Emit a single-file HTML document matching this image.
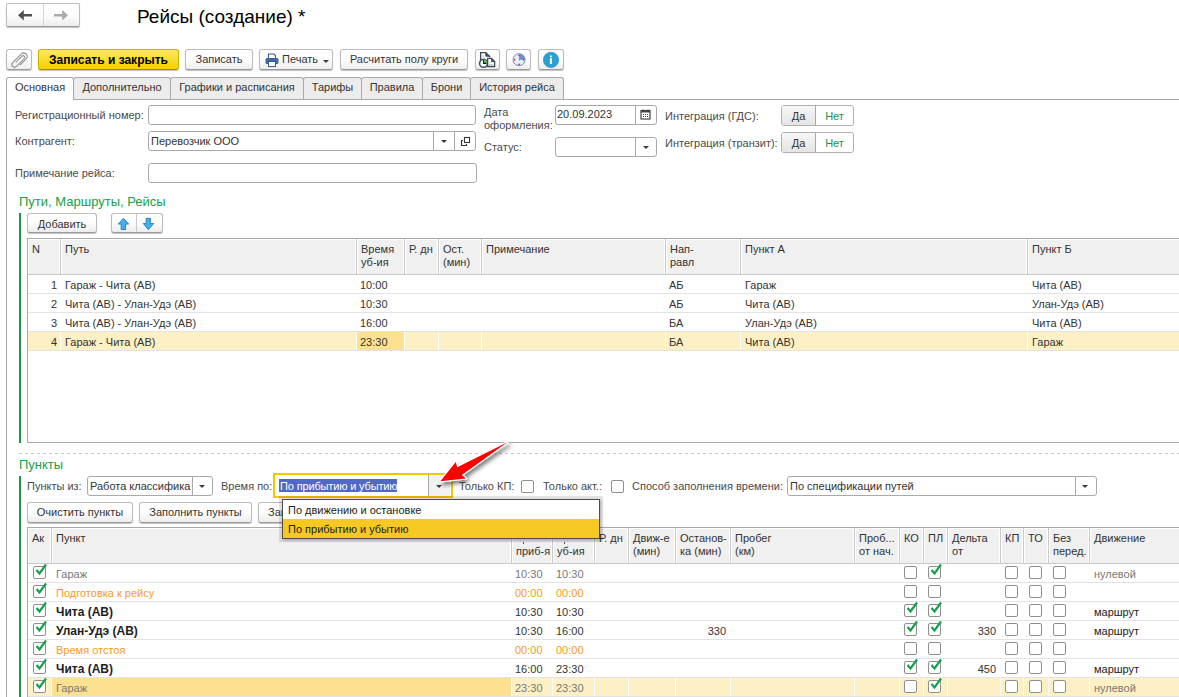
<!DOCTYPE html>
<html><head><meta charset="utf-8">
<style>
*{box-sizing:border-box;margin:0;padding:0}
html,body{width:1179px;height:697px;overflow:hidden;background:#fff}
body{position:relative;font-family:"Liberation Sans",sans-serif;font-size:11px;color:#333}
.a{position:absolute;white-space:nowrap}
.btn{position:absolute;border:1px solid #bcbcbc;border-bottom-color:#9a9a9a;border-radius:3px;background:linear-gradient(#ffffff,#fdfdfd 50%,#ededed);box-shadow:0 1px 1px rgba(0,0,0,.25);text-align:center;color:#333;white-space:nowrap}
.inp{position:absolute;border:1px solid #a9a9a9;border-radius:3px;background:#fff}
.lbl{position:absolute;white-space:nowrap;color:#4a4a4a}
.tab{position:absolute;top:77px;height:22px;border:1px solid #a9a9a9;border-bottom:none;background:#ececec;border-radius:3px 3px 0 0;color:#333;padding-top:3px;text-align:center;white-space:nowrap}
.grn{position:absolute;color:#15a04a;font-size:13px;white-space:nowrap}
.gl{position:absolute;left:19px;width:2px;background:#1a9a48}
.chk{position:absolute;width:13px;height:13px;border:1px solid #8f8f8f;border-radius:2px;background:#fff}
.dd{position:absolute;top:0;bottom:0;border-left:1px solid #a9a9a9}
.tri{position:absolute;width:0;height:0;border-left:3px solid transparent;border-right:3px solid transparent;border-top:3px solid #3a3a3a}
.tbl{position:absolute;border:1px solid #a9a9a9;border-right:none;background:#fff;overflow:hidden}
.hd{position:absolute;top:0;background:#f0f0f0;border-bottom:1px solid #c9c9c9}
.hc{position:absolute;top:0;bottom:0;border-right:1px solid #c9c9c9;box-shadow:inset -1px 0 0 #fff, inset 1px 1px 0 #fff;padding:4px 0 0 4px;line-height:12.5px;color:#333;white-space:nowrap;overflow:hidden}
.row{position:absolute;left:0;right:0;height:19px;border-bottom:1px solid #e3e3e3}
.c{position:absolute;top:4px;white-space:nowrap}
.r{text-align:right}
</style></head>
<body>
<!-- nav -->
<div class="btn" style="left:6px;top:3px;width:74px;height:24px;border-radius:2px"></div>
<div class="a" style="left:43px;top:4px;width:1px;height:22px;background:#d4d4d4"></div>
<svg class="a" style="left:0;top:0" width="80" height="28" viewBox="0 0 80 28"><path d="M18 15.3 L23.8 10 V14.1 H32 V16.6 H23.8 V20.6 Z" fill="#505050"/><path d="M68 15.3 L62.2 10 V14.1 H54 V16.6 H62.2 V20.6 Z" fill="#aaaaaa"/></svg>


<div class="a" style="left:137px;top:5.5px;font-size:19px;color:#000">Рейсы (создание) *</div>

<!-- toolbar -->
<div class="btn" style="left:6px;top:49px;width:26px;height:21px"></div>
<svg class="a" style="left:0;top:39px" width="40" height="35" viewBox="0 40 40 35"><path d="M19.7 66.3 L26.3 59.7 A3.4 3.4 0 0 0 21.5 54.9 L12.7 63.7 A2.6 2.6 0 0 0 16.4 67.4 L24.3 59.5 A1.6 1.6 0 0 0 22 57.2 L15.7 63.5" fill="none" stroke="#8c8c8c" stroke-width="1.05"/></svg>
<div class="btn" style="left:38px;top:49px;width:141px;height:21px;background:linear-gradient(#fde95e,#f5d000);border-color:#d0b000;border-bottom-color:#a88e00;font-weight:bold;color:#000;padding-top:3px;font-size:12px">Записать и закрыть</div>
<div class="btn" style="left:185px;top:49px;width:68px;height:21px;padding-top:3px">Записать</div>
<div class="btn" style="left:259px;top:49px;width:74px;height:21px"></div>
<svg class="a" style="left:265px;top:53px" width="14" height="14" viewBox="0 0 14 14"><path d="M3.5 5 V1 H9 L10.5 2.5 V5" fill="#fff" stroke="#3d5a80" stroke-width="1.1"/><rect x="0.5" y="5" width="13" height="6" rx="1.5" fill="#3d6aa0"/><rect x="3.5" y="8.5" width="7" height="5" fill="#fff" stroke="#3d5a80" stroke-width="1"/></svg>
<div class="a" style="left:282px;top:53px">Печать</div>
<div class="tri" style="left:323px;top:60px"></div>
<div class="btn" style="left:340px;top:49px;width:128px;height:21px;padding-top:3px">Расчитать полу круги</div>
<div class="btn" style="left:475px;top:49px;width:25px;height:21px"></div>
<svg class="a" style="left:476px;top:49px" width="24" height="21" viewBox="476 49 24 21"><g stroke="#3b4a5e" stroke-width="1.3" fill="#fff" stroke-linejoin="miter"><path d="M480.6 60 V52.7 H485.8 L490.2 57"/><path d="M485.8 52.7 V56.2 H489.5" fill="#3b4a5e" stroke-width="0.9"/><path d="M487.6 66.5 V58.4 H491.5 L494.6 61.5 V66.5 Z"/><path d="M491.5 58.4 V61.6 H494.3" fill="#3b4a5e" stroke-width="0.9"/></g><g stroke="#b8c0c8" stroke-width="0.8"><path d="M482 56h2M482 58h3.5M489 62.5h1.5M489 64.5h4"/></g><circle cx="483.5" cy="63.4" r="3.9" fill="#fff" stroke="#3b4a5e" stroke-width="1.5"/><path d="M483.5 63.4 V59.8 A3.6 3.6 0 0 1 487.1 63.4 Z" fill="#55e055"/><path d="M483.6 60.2 V63.4 H486.6" fill="none" stroke="#111" stroke-width="1.1"/></svg>
<div class="btn" style="left:506px;top:49px;width:25px;height:21px"></div>
<svg class="a" style="left:506px;top:49px" width="26" height="21" viewBox="506 49 26 21"><circle cx="519.05" cy="59.7" r="6" fill="#e6effc" stroke="#6b8fd2" stroke-width="1"/><path d="M519.05 59.7 V53.7 A6 6 0 0 1 525.05 59.7 Z" fill="#6b8fd2"/><g fill="#f43b22"><ellipse cx="519.1" cy="55.5" rx="1.1" ry="0.8"/><ellipse cx="514.6" cy="59.7" rx="0.8" ry="1.1"/><ellipse cx="523.5" cy="59.7" rx="0.8" ry="1.1"/><ellipse cx="519.1" cy="64.4" rx="1.1" ry="0.8"/></g><circle cx="519.3" cy="59.8" r="0.6" fill="#5577bb"/></svg>
<div class="btn" style="left:538px;top:49px;width:26px;height:21px"></div>
<svg class="a" style="left:538px;top:49px" width="26" height="21" viewBox="538 49 26 21"><circle cx="551" cy="59.9" r="7.7" fill="#2ba0d3" stroke="#2387b8" stroke-width="0.6"/><rect x="549.9" y="55.6" width="2.1" height="1.5" fill="#fff"/><rect x="549.9" y="58.2" width="2.1" height="5.7" fill="#fff"/></svg>

<!-- tabs -->
<div class="a" style="left:6px;top:99px;width:1px;height:598px;background:#a9a9a9"></div>
<div class="a" style="left:73px;top:99px;width:1106px;height:1px;background:#a9a9a9"></div>
<div class="tab" style="left:6px;width:68px;background:#fff;height:23px;z-index:2">Основная</div>
<div class="tab" style="left:73px;width:98px">Дополнительно</div>
<div class="tab" style="left:170px;width:134px">Графики и расписания</div>
<div class="tab" style="left:303px;width:59px">Тарифы</div>
<div class="tab" style="left:361px;width:62px">Правила</div>
<div class="tab" style="left:422px;width:49px">Брони</div>
<div class="tab" style="left:470px;width:94px">История рейса</div>

<!-- fields -->
<div class="lbl" style="left:15px;top:109px">Регистрационный номер:</div>
<div class="inp" style="left:148px;top:105px;width:328px;height:20px"></div>
<div class="lbl" style="left:15px;top:135px">Контрагент:</div>
<div class="inp" style="left:148px;top:131px;width:328px;height:20px">
  <div class="dd" style="left:284px"></div><div class="dd" style="left:305px"></div>
</div>
<div class="tri" style="left:441px;top:140px"></div>
<svg class="a" style="left:455px;top:131px" width="20" height="20" viewBox="455 131 20 20"><path d="M463 140.5 H461.5 V145.5 H466.5 V144" fill="none" stroke="#333" stroke-width="1.1"/><rect x="464.5" y="137.5" width="5" height="5" fill="none" stroke="#333" stroke-width="1.1"/></svg>
<div class="a" style="left:151px;top:135px;color:#333">Перевозчик ООО</div>
<div class="lbl" style="left:15px;top:167px">Примечание рейса:</div>
<div class="inp" style="left:148px;top:163px;width:329px;height:20px"></div>

<div class="lbl" style="left:484px;top:105.5px;line-height:13.5px">Дата<br>оформления:</div>
<div class="inp" style="left:555px;top:105px;width:102px;height:20px"><div class="dd" style="left:79px"></div></div>
<div class="a" style="left:557px;top:108px">20.09.2023</div>
<svg class="a" style="left:640px;top:109px" width="11" height="11" viewBox="0 0 11 11"><rect x="1" y="1.5" width="9" height="8.5" fill="none" stroke="#444" stroke-width="1.2"/><rect x="1" y="1.5" width="9" height="2" fill="#444"/><path d="M3 5.5h1M5 5.5h1M7 5.5h1M3 7.5h1M5 7.5h1M7 7.5h1" stroke="#444" stroke-width="1"/><path d="M3 0.5v2M8 0.5v2" stroke="#444"/></svg>
<div class="lbl" style="left:484px;top:141px">Статус:</div>
<div class="inp" style="left:555px;top:137px;width:102px;height:20px"><div class="dd" style="left:79px"></div></div>
<div class="tri" style="left:643px;top:146px"></div>

<div class="lbl" style="left:665px;top:110px">Интеграция (ГДС):</div>
<div class="btn" style="left:781px;top:105px;width:73px;height:21px;box-shadow:none;border-color:#b0b0b0;background:#fff"></div>
<div class="a" style="left:782px;top:106px;width:34px;height:19px;background:linear-gradient(#f7f7f7,#e4e4e4);border-right:1px solid #a8a8a8;border-radius:2px 0 0 2px;text-align:center;padding-top:4px">Да</div>
<div class="a" style="left:816px;top:110px;width:37px;text-align:center;color:#12964a">Нет</div>
<div class="lbl" style="left:665px;top:137px">Интеграция (транзит):</div>
<div class="btn" style="left:781px;top:132px;width:73px;height:21px;box-shadow:none;border-color:#b0b0b0;background:#fff"></div>
<div class="a" style="left:782px;top:133px;width:34px;height:19px;background:linear-gradient(#f7f7f7,#e4e4e4);border-right:1px solid #a8a8a8;border-radius:2px 0 0 2px;text-align:center;padding-top:4px">Да</div>
<div class="a" style="left:816px;top:137px;width:37px;text-align:center;color:#12964a">Нет</div>

<!-- section 1 -->
<div class="grn" style="left:19px;top:194px">Пути, Маршруты, Рейсы</div>
<div class="gl" style="top:213px;height:230px"></div>
<div class="btn" style="left:27px;top:213px;width:70px;height:20px;padding-top:4px">Добавить</div>
<div class="btn" style="left:111px;top:213px;width:52px;height:20px"></div>
<div class="a" style="left:136px;top:214px;width:1px;height:18px;background:#c8c8c8"></div>
<svg class="a" style="left:108px;top:210px" width="58" height="26" viewBox="108 210 58 26"><path d="M123.5 218.3 L128.7 224.1 H125.6 V229.5 H121.2 V224.1 H118.3 Z" fill="#45b0ee" stroke="#2078b6" stroke-width="0.9" stroke-linejoin="miter"/><path d="M148.4 229.7 L153.5 223.5 H150.4 V218.3 H146.2 V223.5 H143.3 Z" fill="#45b0ee" stroke="#2078b6" stroke-width="0.9"/></svg>

<div class="tbl" style="left:27px;top:238px;width:1152px;height:205px">
  <div class="hd" style="left:0;width:1152px;height:36px">
    <div class="hc" style="left:0;width:33px">N</div>
    <div class="hc" style="left:33px;width:296px">Путь</div>
    <div class="hc" style="left:329px;width:48px">Время<br>уб-ия</div>
    <div class="hc" style="left:377px;width:34px">Р. дн</div>
    <div class="hc" style="left:411px;width:43px">Ост.<br>(мин)</div>
    <div class="hc" style="left:454px;width:184px">Примечание</div>
    <div class="hc" style="left:638px;width:75px">Нап-<br>равл</div>
    <div class="hc" style="left:713px;width:287px">Пункт А</div>
    <div class="hc" style="left:1000px;width:160px">Пункт Б</div>
  </div>
  <div class="row" style="top:36px"><div class="c r" style="left:0;width:29px">1</div><div class="c" style="left:37px">Гараж - Чита (АВ)</div><div class="c" style="left:332px">10:00</div><div class="c" style="left:641px">АБ</div><div class="c" style="left:717px">Гараж</div><div class="c" style="left:1004px">Чита (АВ)</div></div>
  <div class="row" style="top:55px"><div class="c r" style="left:0;width:29px">2</div><div class="c" style="left:37px">Чита (АВ) - Улан-Удэ (АВ)</div><div class="c" style="left:332px">10:30</div><div class="c" style="left:641px">АБ</div><div class="c" style="left:717px">Чита (АВ)</div><div class="c" style="left:1004px">Улан-Удэ (АВ)</div></div>
  <div class="row" style="top:74px"><div class="c r" style="left:0;width:29px">3</div><div class="c" style="left:37px">Чита (АВ) - Улан-Удэ (АВ)</div><div class="c" style="left:332px">16:00</div><div class="c" style="left:641px">БА</div><div class="c" style="left:717px">Улан-Удэ (АВ)</div><div class="c" style="left:1004px">Чита (АВ)</div></div>
  <div class="row" style="top:93px;background:#fdf0c5"><div class="a" style="left:329px;top:0;width:47px;height:18px;background:#fce190"></div><div class="a" style="left:32px;top:0;width:1px;height:18px;background:#fff"></div><div class="a" style="left:328px;top:0;width:1px;height:18px;background:#fff"></div><div class="a" style="left:376px;top:0;width:1px;height:18px;background:#fff"></div><div class="a" style="left:410px;top:0;width:1px;height:18px;background:#fff"></div><div class="a" style="left:453px;top:0;width:1px;height:18px;background:#fff"></div><div class="a" style="left:637px;top:0;width:1px;height:18px;background:#fff"></div><div class="a" style="left:712px;top:0;width:1px;height:18px;background:#fff"></div><div class="a" style="left:999px;top:0;width:1px;height:18px;background:#fff"></div><div class="c r" style="left:0;width:29px">4</div><div class="c" style="left:37px">Гараж - Чита (АВ)</div><div class="c" style="left:332px">23:30</div><div class="c" style="left:641px">БА</div><div class="c" style="left:717px">Чита (АВ)</div><div class="c" style="left:1004px">Гараж</div></div>
</div>

<!-- section 2 -->
<div class="a" style="left:19px;top:453px;width:1160px;height:1px;background:repeating-linear-gradient(90deg,#c8c8c8 0 3px,transparent 3px 6px)"></div>
<div class="grn" style="left:19px;top:457px">Пункты</div>
<div class="gl" style="top:476px;height:221px"></div>

<div class="lbl" style="left:27px;top:480px">Пункты из:</div>
<div class="inp" style="left:87px;top:476px;width:126px;height:20px;overflow:hidden"><div class="dd" style="left:104px"></div><div class="a" style="left:2px;top:3px;width:102px;overflow:hidden;color:#333">Работа классифика</div></div>
<div class="tri" style="left:199px;top:485px"></div>
<div class="lbl" style="left:221px;top:480px">Время по:</div>
<div class="a" style="left:273px;top:473px;width:180px;height:25px;border:2px solid #f7c600;border-radius:0;background:#fff"></div>
<div class="a" style="left:428px;top:475px;width:22px;height:21px;background:#f2f2f2;border-left:1px solid #a9a9a9"></div>
<div class="tri" style="left:436px;top:485px"></div>
<div class="a" style="left:279px;top:479px;height:13px;width:118px;background:#5068c6"></div>
<div class="a" style="left:280px;top:480px;color:#fff;letter-spacing:-0.15px">По прибытию и убытию</div>
<div class="lbl" style="left:459px;top:480px">Только КП:</div>
<div class="chk" style="left:521px;top:480px"></div>
<div class="lbl" style="left:543px;top:480px">Только акт.:</div>
<div class="chk" style="left:611px;top:480px"></div>
<div class="lbl" style="left:632px;top:480px">Способ заполнения времени:</div>
<div class="inp" style="left:787px;top:476px;width:310px;height:20px"><div class="dd" style="left:287px"></div></div>
<div class="a" style="left:790px;top:480px">По спецификации путей</div>
<div class="tri" style="left:1082px;top:485px"></div>

<div class="btn" style="left:27px;top:502px;width:106px;height:21px;padding-top:3px">Очистить пункты</div>
<div class="btn" style="left:139px;top:502px;width:113px;height:21px;padding-top:3px">Заполнить пункты</div>
<div class="btn" style="left:258px;top:502px;width:80px;height:21px;padding:3px 0 0 9px;text-align:left">Заполнить</div>

<div class="tbl" style="left:27px;top:527px;width:1152px;height:170px;border-bottom:none">
  <div class="hd" style="left:0;width:1152px;height:36px">
    <div class="hc" style="left:0;width:24px">Ак</div>
    <div class="hc" style="left:24px;width:460px">Пункт</div>
    <div class="hc" style="left:484px;width:41px"><br>приб-я</div><div class="a" style="left:495px;top:14px;width:1px;height:2px;background:#555"></div>
    <div class="hc" style="left:525px;width:42px"><br>уб-ия</div><div class="a" style="left:536px;top:14px;width:1px;height:2px;background:#555"></div>
    <div class="hc" style="left:567px;width:34px">Р. дн</div>
    <div class="hc" style="left:601px;width:47px">Движ-е<br>(мин)</div>
    <div class="hc" style="left:648px;width:55px">Останов-<br>ка (мин)</div>
    <div class="hc" style="left:703px;width:124px">Пробег<br>(км)</div>
    <div class="hc" style="left:827px;width:45px">Проб...<br>от нач.</div>
    <div class="hc" style="left:872px;width:24px">КО</div>
    <div class="hc" style="left:896px;width:24px">ПЛ</div>
    <div class="hc" style="left:920px;width:53px">Дельта<br>от</div>
    <div class="hc" style="left:973px;width:23px">КП</div>
    <div class="hc" style="left:996px;width:25px">ТО</div>
    <div class="hc" style="left:1021px;width:41px">Без<br>перед.</div>
    <div class="hc" style="left:1062px;width:100px">Движение</div>
  </div>
<div class="row" style="top:36px;"><div class="chk" style="left:5px;top:2px"></div><svg class="a" style="left:6px;top:-1px" width="14" height="14" viewBox="0 0 14 14"><path d="M2.5 7 L5.5 10.5 L12 1.5" fill="none" stroke="#17a04b" stroke-width="2.2"/></svg><div class="c" style="left:28px;color:#777;font-weight:normal">Гараж</div><div class="c" style="left:487px;color:#777">10:30</div><div class="c" style="left:528px;color:#777">10:30</div><div class="chk" style="left:876px;top:2px"></div><div class="chk" style="left:900px;top:2px"></div><svg class="a" style="left:901px;top:-1px" width="14" height="14" viewBox="0 0 14 14"><path d="M2.5 7 L5.5 10.5 L12 1.5" fill="none" stroke="#17a04b" stroke-width="2.2"/></svg><div class="chk" style="left:977px;top:2px"></div><div class="chk" style="left:1001px;top:2px"></div><div class="chk" style="left:1025px;top:2px"></div><div class="c" style="left:1066px;color:#777">нулевой</div></div>
<div class="row" style="top:55px;"><div class="chk" style="left:5px;top:2px"></div><svg class="a" style="left:6px;top:-1px" width="14" height="14" viewBox="0 0 14 14"><path d="M2.5 7 L5.5 10.5 L12 1.5" fill="none" stroke="#17a04b" stroke-width="2.2"/></svg><div class="c" style="left:28px;color:#f89a1c;font-weight:normal">Подготовка к рейсу</div><div class="c" style="left:487px;color:#f89a1c">00:00</div><div class="c" style="left:528px;color:#f89a1c">00:00</div><div class="chk" style="left:876px;top:2px"></div><div class="chk" style="left:900px;top:2px"></div><div class="chk" style="left:977px;top:2px"></div><div class="chk" style="left:1001px;top:2px"></div><div class="chk" style="left:1025px;top:2px"></div></div>
<div class="row" style="top:74px;"><div class="chk" style="left:5px;top:2px"></div><svg class="a" style="left:6px;top:-1px" width="14" height="14" viewBox="0 0 14 14"><path d="M2.5 7 L5.5 10.5 L12 1.5" fill="none" stroke="#17a04b" stroke-width="2.2"/></svg><div class="c" style="left:28px;color:#1e1e1e;font-weight:bold;font-size:12px;top:3px">Чита (АВ)</div><div class="c" style="left:487px;color:#333">10:30</div><div class="c" style="left:528px;color:#333">10:30</div><div class="chk" style="left:876px;top:2px"></div><svg class="a" style="left:877px;top:-1px" width="14" height="14" viewBox="0 0 14 14"><path d="M2.5 7 L5.5 10.5 L12 1.5" fill="none" stroke="#17a04b" stroke-width="2.2"/></svg><div class="chk" style="left:900px;top:2px"></div><svg class="a" style="left:901px;top:-1px" width="14" height="14" viewBox="0 0 14 14"><path d="M2.5 7 L5.5 10.5 L12 1.5" fill="none" stroke="#17a04b" stroke-width="2.2"/></svg><div class="chk" style="left:977px;top:2px"></div><div class="chk" style="left:1001px;top:2px"></div><div class="chk" style="left:1025px;top:2px"></div><div class="c" style="left:1066px;color:#222">маршрут</div></div>
<div class="row" style="top:93px;"><div class="chk" style="left:5px;top:2px"></div><svg class="a" style="left:6px;top:-1px" width="14" height="14" viewBox="0 0 14 14"><path d="M2.5 7 L5.5 10.5 L12 1.5" fill="none" stroke="#17a04b" stroke-width="2.2"/></svg><div class="c" style="left:28px;color:#1e1e1e;font-weight:bold;font-size:12px;top:3px">Улан-Удэ (АВ)</div><div class="c" style="left:487px;color:#333">10:30</div><div class="c" style="left:528px;color:#333">16:00</div><div class="c r" style="left:648px;width:50px">330</div><div class="chk" style="left:876px;top:2px"></div><svg class="a" style="left:877px;top:-1px" width="14" height="14" viewBox="0 0 14 14"><path d="M2.5 7 L5.5 10.5 L12 1.5" fill="none" stroke="#17a04b" stroke-width="2.2"/></svg><div class="chk" style="left:900px;top:2px"></div><svg class="a" style="left:901px;top:-1px" width="14" height="14" viewBox="0 0 14 14"><path d="M2.5 7 L5.5 10.5 L12 1.5" fill="none" stroke="#17a04b" stroke-width="2.2"/></svg><div class="c r" style="left:920px;width:48px">330</div><div class="chk" style="left:977px;top:2px"></div><div class="chk" style="left:1001px;top:2px"></div><div class="chk" style="left:1025px;top:2px"></div><div class="c" style="left:1066px;color:#222">маршрут</div></div>
<div class="row" style="top:112px;"><div class="chk" style="left:5px;top:2px"></div><svg class="a" style="left:6px;top:-1px" width="14" height="14" viewBox="0 0 14 14"><path d="M2.5 7 L5.5 10.5 L12 1.5" fill="none" stroke="#17a04b" stroke-width="2.2"/></svg><div class="c" style="left:28px;color:#f89a1c;font-weight:normal">Время отстоя</div><div class="c" style="left:487px;color:#f89a1c">00:00</div><div class="c" style="left:528px;color:#f89a1c">00:00</div><div class="chk" style="left:876px;top:2px"></div><div class="chk" style="left:900px;top:2px"></div><div class="chk" style="left:977px;top:2px"></div><div class="chk" style="left:1001px;top:2px"></div><div class="chk" style="left:1025px;top:2px"></div></div>
<div class="row" style="top:131px;"><div class="chk" style="left:5px;top:2px"></div><svg class="a" style="left:6px;top:-1px" width="14" height="14" viewBox="0 0 14 14"><path d="M2.5 7 L5.5 10.5 L12 1.5" fill="none" stroke="#17a04b" stroke-width="2.2"/></svg><div class="c" style="left:28px;color:#1e1e1e;font-weight:bold;font-size:12px;top:3px">Чита (АВ)</div><div class="c" style="left:487px;color:#333">16:00</div><div class="c" style="left:528px;color:#333">23:30</div><div class="chk" style="left:876px;top:2px"></div><svg class="a" style="left:877px;top:-1px" width="14" height="14" viewBox="0 0 14 14"><path d="M2.5 7 L5.5 10.5 L12 1.5" fill="none" stroke="#17a04b" stroke-width="2.2"/></svg><div class="chk" style="left:900px;top:2px"></div><svg class="a" style="left:901px;top:-1px" width="14" height="14" viewBox="0 0 14 14"><path d="M2.5 7 L5.5 10.5 L12 1.5" fill="none" stroke="#17a04b" stroke-width="2.2"/></svg><div class="c r" style="left:920px;width:48px">450</div><div class="chk" style="left:977px;top:2px"></div><div class="chk" style="left:1001px;top:2px"></div><div class="chk" style="left:1025px;top:2px"></div><div class="c" style="left:1066px;color:#222">маршрут</div></div>
<div class="row" style="top:150px;background:#fdf0c5;"><div class="a" style="left:24px;top:0;width:459px;height:18px;background:#fce190"></div><div class="a" style="left:23px;top:0;width:1px;height:18px;background:#fff"></div><div class="a" style="left:483px;top:0;width:1px;height:18px;background:#fff"></div><div class="a" style="left:524px;top:0;width:1px;height:18px;background:#fff"></div><div class="a" style="left:566px;top:0;width:1px;height:18px;background:#fff"></div><div class="a" style="left:600px;top:0;width:1px;height:18px;background:#fff"></div><div class="a" style="left:647px;top:0;width:1px;height:18px;background:#fff"></div><div class="a" style="left:702px;top:0;width:1px;height:18px;background:#fff"></div><div class="a" style="left:826px;top:0;width:1px;height:18px;background:#fff"></div><div class="a" style="left:871px;top:0;width:1px;height:18px;background:#fff"></div><div class="a" style="left:895px;top:0;width:1px;height:18px;background:#fff"></div><div class="a" style="left:919px;top:0;width:1px;height:18px;background:#fff"></div><div class="a" style="left:972px;top:0;width:1px;height:18px;background:#fff"></div><div class="a" style="left:995px;top:0;width:1px;height:18px;background:#fff"></div><div class="a" style="left:1020px;top:0;width:1px;height:18px;background:#fff"></div><div class="a" style="left:1061px;top:0;width:1px;height:18px;background:#fff"></div><div class="chk" style="left:5px;top:2px"></div><svg class="a" style="left:6px;top:-1px" width="14" height="14" viewBox="0 0 14 14"><path d="M2.5 7 L5.5 10.5 L12 1.5" fill="none" stroke="#17a04b" stroke-width="2.2"/></svg><div class="c" style="left:28px;color:#777;font-weight:normal">Гараж</div><div class="c" style="left:487px;color:#777">23:30</div><div class="c" style="left:528px;color:#777">23:30</div><div class="chk" style="left:876px;top:2px"></div><div class="chk" style="left:900px;top:2px"></div><svg class="a" style="left:901px;top:-1px" width="14" height="14" viewBox="0 0 14 14"><path d="M2.5 7 L5.5 10.5 L12 1.5" fill="none" stroke="#17a04b" stroke-width="2.2"/></svg><div class="chk" style="left:977px;top:2px"></div><div class="chk" style="left:1001px;top:2px"></div><div class="chk" style="left:1025px;top:2px"></div><div class="c" style="left:1066px;color:#777">нулевой</div></div>
</div>

<!-- popup -->
<div class="a" style="left:282px;top:499px;width:318px;height:40px;border:1px solid #4d4d4d;background:#fff;box-shadow:0 0 0 3px rgba(0,0,0,.1),1px 1px 3px rgba(0,0,0,.25)">
  <div class="a" style="left:0;top:19px;width:316px;height:19px;background:#f6c824"></div>
  <div class="a" style="left:5px;top:4px;color:#222">По движению и остановке</div>
  <div class="a" style="left:5px;top:23px;color:#222">По прибытию и убытию</div>
</div>

<!-- red arrow -->
<svg class="a" style="left:430px;top:435px;overflow:visible" width="90" height="55" viewBox="430 435 90 55">
  <defs><filter id="sh" x="-30%" y="-30%" width="160%" height="160%"><feGaussianBlur in="SourceAlpha" stdDeviation="2"/><feOffset dx="2" dy="3"/><feComponentTransfer><feFuncA type="linear" slope="0.5"/></feComponentTransfer><feMerge><feMergeNode/><feMergeNode in="SourceGraphic"/></feMerge></filter></defs>
  <g filter="url(#sh)"><path d="M440.4 481.2 L455.8 462 L457.2 467.2 L507.5 442.3 L461.8 475.1 L466 478.4 Z" fill="#fff" stroke="#fff" stroke-width="2.4" stroke-linejoin="round"/><path d="M440.4 481.2 L455.8 462 L457.2 467.2 L507.5 442.3 L461.8 475.1 L466 478.4 Z" fill="#ff0000"/></g>
</svg>
</body></html>
